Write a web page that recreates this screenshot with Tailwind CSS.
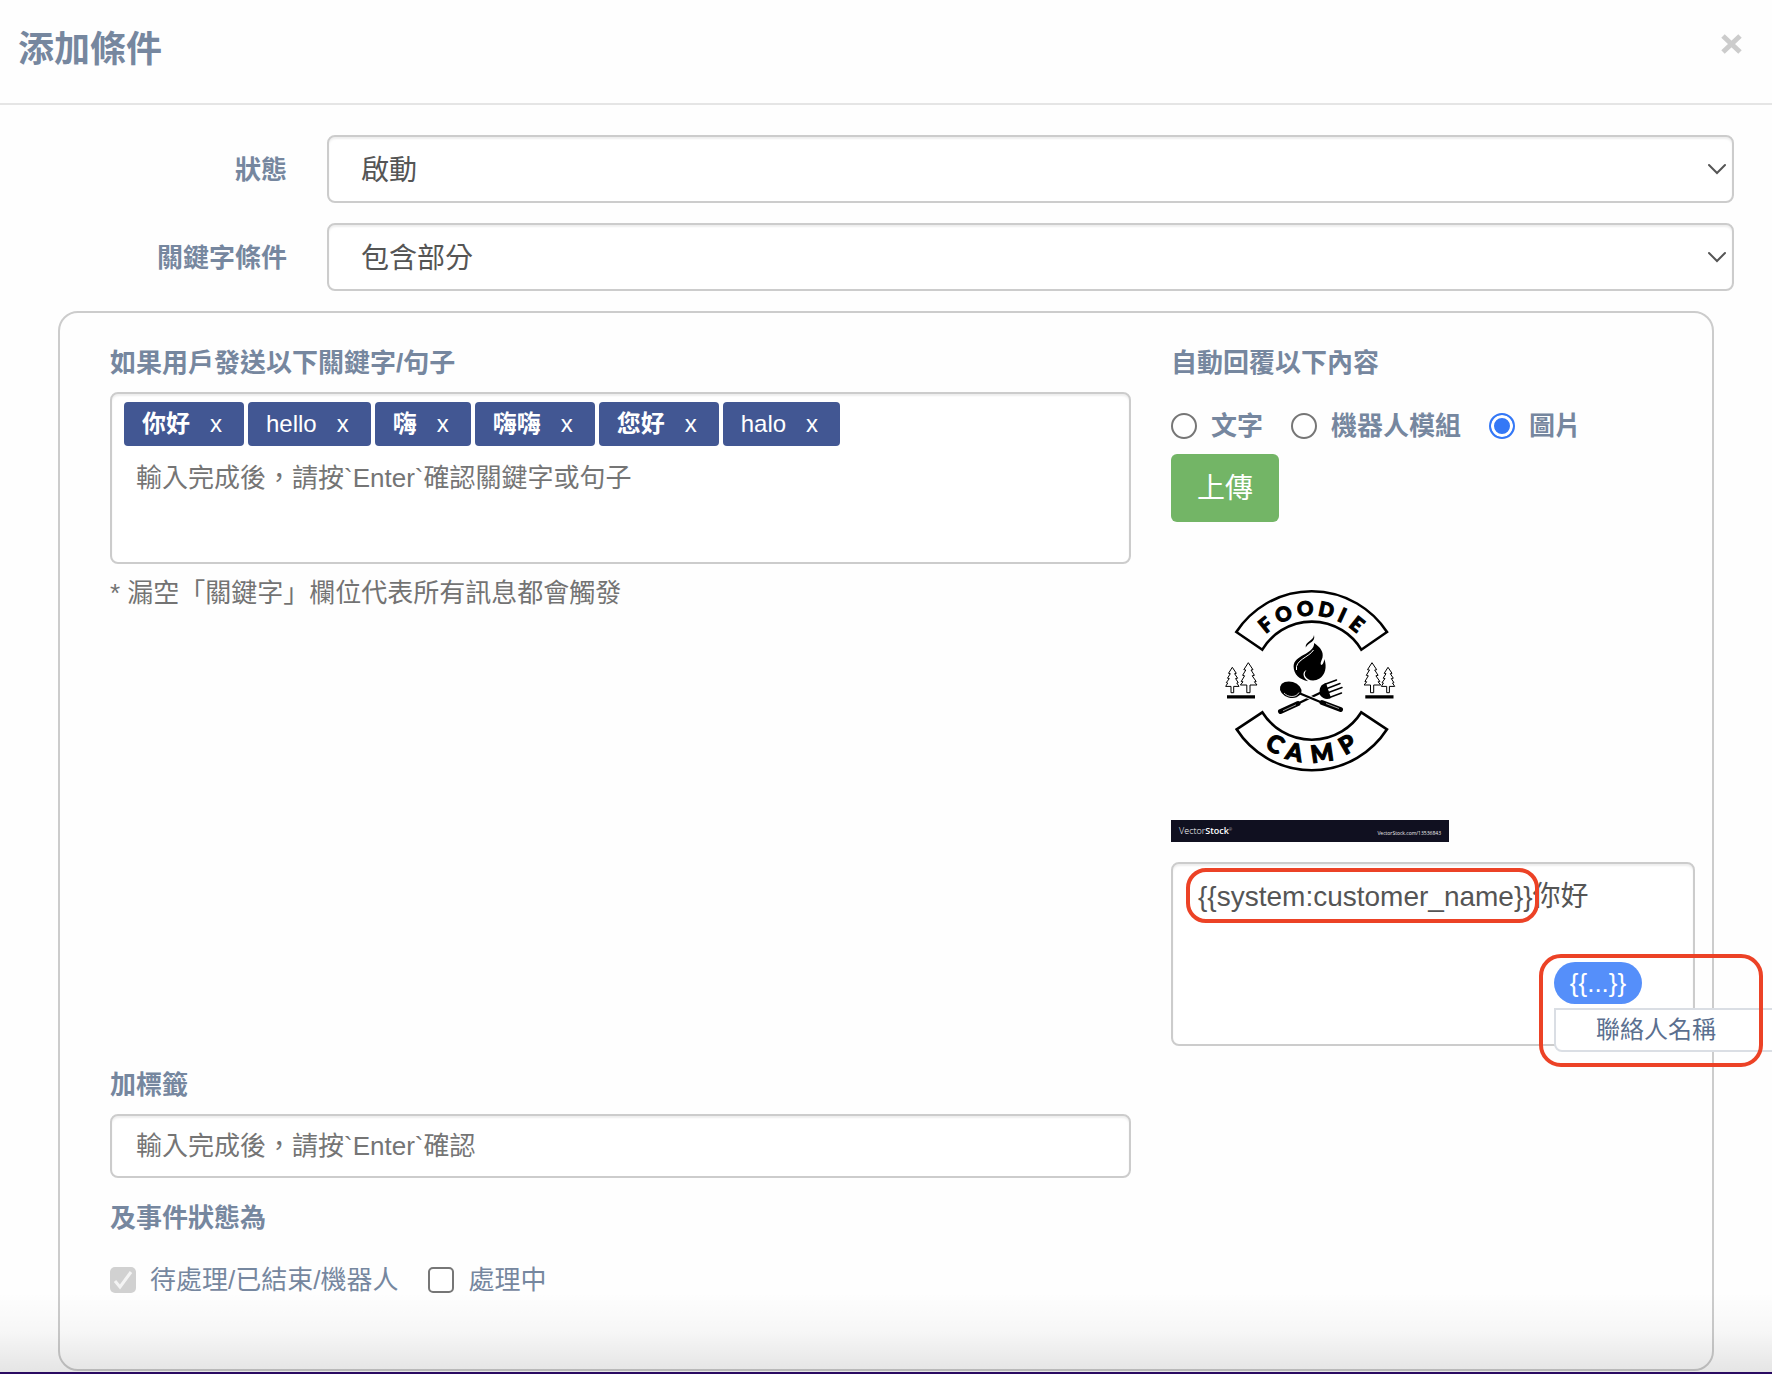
<!DOCTYPE html>
<html lang="zh-Hant">
<head>
<meta charset="utf-8">
<meta name="viewport" content="width=device-width, initial-scale=1">
<title>添加條件</title>
<script src="https://cdn.jsdelivr.net/npm/@tailwindcss/browser@4"></script>
</head>
<body class="bg-[#fefefe] font-['Liberation_Sans','Noto_Sans_CJK_TC',sans-serif] text-[26px] leading-10 text-[#76879f]">
<div role="dialog" aria-labelledby="dialog-title" class="relative overflow-hidden border-b-2 border-[#2a0a62] bg-[#fefefe]">
  <header class="flex items-start justify-between border-b-2 border-[#e5e5e5] pt-6 pb-[29px] pl-[18px] pr-[30px]">
    <h1 id="dialog-title" class="pt-[2px] text-[36px] leading-[48px] font-bold">添加條件</h1>
    <button type="button" aria-label="關閉" class="flex h-10 items-center text-[#ccc]">
      <svg width="21" height="20" viewBox="0 0 21 20" fill="none" stroke="currentColor" stroke-width="5"><path d="M2 2 19 18M19 2 2 18"/></svg>
    </button>
  </header>

  <form class="pt-[30px] pb-px">
    <div class="flex items-center gap-10 pr-[38px]">
      <label for="status" class="w-[287px] flex-none pt-[2px] text-right font-bold">狀態</label>
      <div class="relative flex-1">
        <select id="status" class="block h-[68px] w-full appearance-none rounded-lg border-2 border-[#ccc] bg-white px-8 pt-1 text-[28px] text-[#555] shadow-[inset_0_2px_2px_rgba(0,0,0,0.07)]"><option>啟動</option></select>
        <svg class="pointer-events-none absolute top-7 right-2 text-[#555]" width="18" height="12" viewBox="0 0 18 12" fill="none" stroke="currentColor" stroke-width="2" stroke-linecap="round"><path d="m1 2 8 8 8-8"/></svg>
      </div>
    </div>
    <div class="mt-5 flex items-center gap-10 pr-[38px]">
      <label for="match" class="w-[287px] flex-none pt-[2px] text-right font-bold">關鍵字條件</label>
      <div class="relative flex-1">
        <select id="match" class="block h-[68px] w-full appearance-none rounded-lg border-2 border-[#ccc] bg-white px-8 pt-1 text-[28px] text-[#555] shadow-[inset_0_2px_2px_rgba(0,0,0,0.07)]"><option>包含部分</option></select>
        <svg class="pointer-events-none absolute top-7 right-2 text-[#555]" width="18" height="12" viewBox="0 0 18 12" fill="none" stroke="currentColor" stroke-width="2" stroke-linecap="round"><path d="m1 2 8 8 8-8"/></svg>
      </div>
    </div>

    <div class="mx-[58px] mt-5 grid grid-cols-[minmax(0,1fr)_524px] gap-x-10 gap-y-[19px] rounded-[20px] border-2 border-[#ccc] pt-[30px] pr-[17px] pb-[69px] pl-[50px]">
      <section>
        <label for="keywords" class="mb-[9px] block font-bold">如果用戶發送以下關鍵字/句子</label>
        <div class="min-h-[172px] rounded-lg border-2 border-[#ccc] bg-white px-3 pt-2 shadow-[inset_0_2px_2px_rgba(0,0,0,0.07)]">
          <ul class="flex flex-wrap gap-1 text-2xl text-white">
            <li class="flex h-11 items-center gap-5 rounded-sm bg-[#425793] pr-[22px] pl-[18px]"><span class="font-bold">你好</span><button type="button" aria-label="移除 你好">x</button></li>
            <li class="flex h-11 items-center gap-5 rounded-sm bg-[#425793] pr-[22px] pl-[18px]"><span>hello</span><button type="button" aria-label="移除 hello">x</button></li>
            <li class="flex h-11 items-center gap-5 rounded-sm bg-[#425793] pr-[22px] pl-[18px]"><span class="font-bold">嗨</span><button type="button" aria-label="移除 嗨">x</button></li>
            <li class="flex h-11 items-center gap-5 rounded-sm bg-[#425793] pr-[22px] pl-[18px]"><span class="font-bold">嗨嗨</span><button type="button" aria-label="移除 嗨嗨">x</button></li>
            <li class="flex h-11 items-center gap-5 rounded-sm bg-[#425793] pr-[22px] pl-[18px]"><span class="font-bold">您好</span><button type="button" aria-label="移除 您好">x</button></li>
            <li class="flex h-11 items-center gap-5 rounded-sm bg-[#425793] pr-[22px] pl-[18px]"><span>halo</span><button type="button" aria-label="移除 halo">x</button></li>
          </ul>
          <input id="keywords" type="text" placeholder="輸入完成後，請按`Enter`確認關鍵字或句子" class="h-16 w-full px-3 outline-none placeholder:text-[#757575]">
        </div>
        <p class="mt-[9px] text-[#737373]">* 漏空「關鍵字」欄位代表所有訊息都會觸發</p>
      </section>

      <section>
        <h2 class="font-bold">自動回覆以下內容</h2>
        <div role="radiogroup" class="mt-[23px] flex gap-7 font-bold">
          <label class="flex items-center gap-[14px]"><input type="radio" name="reply" class="size-[26px] appearance-none rounded-full border-2 border-[#767676] bg-white">文字</label>
          <label class="flex items-center gap-[14px]"><input type="radio" name="reply" class="size-[26px] appearance-none rounded-full border-2 border-[#767676] bg-white">機器人模組</label>
          <label class="flex items-center gap-[14px]"><input type="radio" name="reply" checked class="size-[26px] appearance-none rounded-full border-2 border-[#3478f6] bg-[#3478f6] shadow-[inset_0_0_0_3px_white]">圖片</label>
        </div>
        <button type="button" class="mt-2 block h-[68px] w-[108px] rounded-md bg-[#73b566] pt-[2px] text-[28px] text-white">上傳</button>

        <svg class="mt-5 block" role="img" aria-label="Foodie Camp" width="278" height="300" viewBox="0 0 278 300">
          <!-- banners -->
          <g fill="#fff" stroke="#000" stroke-width="2.6">
            <path d="M65.3 90A90 90 0 0 1 216 90L190.3 107.7A57.7 57.7 0 0 0 91.3 107.7Z"/>
            <path d="M65.6 187.3A89.5 89.5 0 0 0 216 187.3L190.3 170.3A58.4 58.4 0 0 1 91.3 170.3Z"/>
          </g>
          <g class="font-['Lato'] font-black" fill="#000" stroke="#000" stroke-width="1.1">
            <text font-size="20" x="94.7 107.8 126.8 146.6 165.5 177" y="92 81.7 74.5 73.3 78.3 84.2" rotate="-39.4 -22.7 -5 11.8 24.9 38.7">FOODIE</text>
            <text font-size="24" x="93 113.4 141 174" y="205.3 216.6 221.2 213.5" rotate="30.6 12.9 -8.3 -29.8">CAMP</text>
          </g>
          <!-- trees -->
          <g fill="none" stroke="#000" stroke-width="1">
            <path id="tall" d="M77.3 120.7l4.7 7-2 .3 3.4 5.3-2.2.5 4 5.7-1.8.3 2.6 3.2h-7v7.7h-3.2v-7.7h-6.4l2.6-3.2-1.8-.3 3.4-5.7-2-.5 3.2-5.3-2-.3z"/>
            <path id="short" d="M61.3 125.3l4 6-1.7.4 3 4.5-2 .4 2.6 4-1.4.4 2.2 3.4h-5.3v6.3h-2.7v-6.3h-5.3l2-3.4-1.4-.4 3-4-1.8-.4 2.8-4.5-1.8-.4z"/>
            <use href="#tall" x="123.7"/><use href="#short" x="155.7"/>
          </g>
          <path d="M56 153.3h28v3.2H56zM194.3 153.3h28.2v3.2h-28.2z"/>
          <!-- flame -->
          <path d="M134.7 105.5c-.5-6.5 7.5-6 8.3-12.5 1.8 7.500-5.500 7-8.300 12.500z"/>
          <path d="M143.2 101c6.500 4.500 9.500 9 8.300 14.500-.5 2.500-2.500 5-1.700 7 .8 1.700 3.200-1.500 3.500-5.500 3 8 .8 16-4.700 19.500-5.500 3.500-12.500 2-14.500-2.500-1-2.300.3-4.800 1.500-6-4.200 1.500-4.500 7 1.500 11.200-8.500-1.500-14.500-7-14.500-14.700 0-12 20.500-11.500 20.600-23.500z"/>
          <path d="M125.5 128c-2-10 13-13 17-20" fill="none" stroke="#fff" stroke-width="1"/>
          <!-- fork -->
          <path d="M109.5 169.5 127 161.5" stroke="#000" stroke-width="5" stroke-linecap="round"/>
          <path d="M125 162.5 152 149.5" stroke="#000" stroke-width="2.4"/>
          <path d="M149 153c-1.500-7 1-10.500 6-12l5 15c-4 2-8 1-11-3z"/>
          <path d="M154 142.2l11.500-4.200M156 146.500l13-5M157.500 150.500l13.500-5M158.500 155.500l12-4.500" fill="none" stroke="#000" stroke-width="1.5" stroke-linecap="round"/>
          <!-- spoon -->
          <path d="M129 151.5 152 161" stroke="#fff" stroke-width="4"/>
          <path d="M129 151.5 153 161.5" stroke="#000" stroke-width="2.4"/>
          <path d="M151 160.5 169.5 167.5" stroke="#000" stroke-width="5" stroke-linecap="round"/>
          <ellipse cx="119.7" cy="147.7" rx="11" ry="8" transform="rotate(16 119.7 147.7)"/>
          <path d="M113 151c4 4.500 12 5 15-.5" fill="none" stroke="#fff" stroke-width=".8"/>
          <path d="M112 168.8 125 162.8M155 161.5 168 166.5" stroke="#fff" stroke-width=".6"/>
          <!-- footer strip -->
          <rect y="278" width="278" height="22" fill="#101020"/>
          <text x="8" y="292" font-size="9" fill="#fff" class="font-['Open_Sans'] font-light">Vector<tspan font-weight="600">Stock</tspan><tspan font-size="4" dy="-3">®</tspan></text>
          <text x="270" y="293" font-size="5" fill="#eee" text-anchor="end" class="font-['Open_Sans']">VectorStock.com/13536843</text>
        </svg>

        <div class="relative mt-5">
          <textarea aria-label="圖片訊息" class="block h-[184px] w-full resize-none rounded-lg border-2 border-[#ccc] bg-white px-[25px] py-[13px] text-[28px] text-[#555] shadow-[inset_0_2px_2px_rgba(0,0,0,0.07)] outline-none">{{system:customer_name}}你好</textarea>
          <!-- highlight around the variable -->
          <div class="pointer-events-none absolute top-[6px] left-[15px] h-[55px] w-[353px] rounded-[20px] border-4 border-[#ec4226]"></div>
          <!-- variable picker -->
          <div class="absolute top-[100px] left-[383px]">
            <button type="button" class="block h-[42px] w-[88px] rounded-full bg-[#558ffa] text-white">{{...}}</button>
            <ul class="mt-1 w-[260px] rounded-b-lg border-2 border-[#dadee4] bg-white text-2xl leading-10 text-[#5b6f8f]">
              <li><button type="button" class="block w-full px-10 text-left">聯絡人名稱</button></li>
            </ul>
          </div>
          <div class="pointer-events-none absolute top-[92px] left-[368px] h-[113px] w-[224px] rounded-[22px] border-4 border-[#ec4226]"></div>
        </div>
      </section>

      <section>
        <label for="tags" class="mb-[9px] block font-bold">加標籤</label>
        <input id="tags" type="text" placeholder="輸入完成後，請按`Enter`確認" class="block h-16 w-full rounded-lg border-2 border-[#ccc] bg-white px-6 shadow-[inset_0_2px_2px_rgba(0,0,0,0.07)] outline-none placeholder:text-[#757575]">
        <fieldset class="pt-5">
          <legend class="float-left font-bold">及事件狀態為</legend>
          <div class="clear-both flex gap-[30px] pt-[22px]">
            <label class="flex items-center gap-[14px]">
              <span class="relative flex">
                <input type="checkbox" checked disabled class="size-[26px] appearance-none rounded-[5px] bg-[#d1d1d1]">
                <svg class="pointer-events-none absolute inset-0" width="26" height="26" viewBox="0 0 26 26" fill="none" stroke="#f4f4f4" stroke-width="3"><path d="m5 14 5 6L21 5"/></svg>
              </span>待處理/已結束/機器人</label>
            <label class="flex items-center gap-[14px]"><input type="checkbox" class="size-[26px] appearance-none rounded-[5px] border-2 border-[#767676] bg-white">處理中</label>
          </div>
        </fieldset>
      </section>
    </div>
  </form>
  <div class="pointer-events-none absolute inset-x-0 bottom-0 h-20 bg-linear-to-b from-black/0 via-black/3 to-black/10"></div>
</div>
</body>
</html>
